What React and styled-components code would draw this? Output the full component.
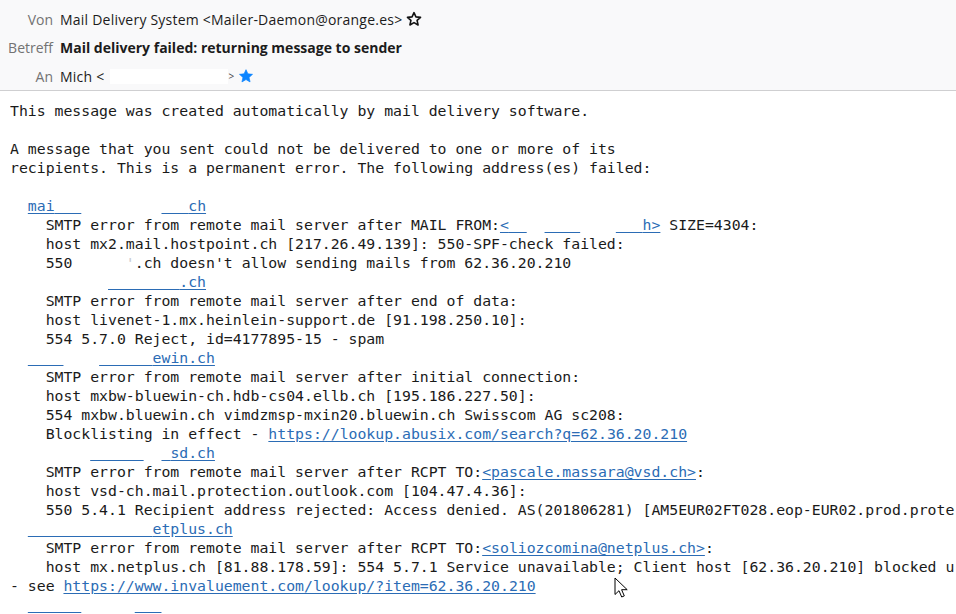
import React from "react";
import styled, { createGlobalStyle } from "styled-components";

const Global = createGlobalStyle`
  html, body { margin: 0; padding: 0; background: #fff; }
  body { overflow: hidden; }
`;

const Page = styled.div`
  position: relative;
  width: 956px;
  height: 614px;
  overflow: hidden;
  background: #fff;
`;

const Header = styled.div`
  display: grid;
  grid-template-columns: 53px 1fr;
  grid-auto-rows: 28.5px;
  column-gap: 7px;
  padding-top: 5px;
  height: 85px;
  background: #f9f9fa;
  border-bottom: 1px solid #cfcfd1;
  font-family: "Open Sans", "Noto Sans", sans-serif;
  font-size: 14px;
`;

const Label = styled.div`
  display: flex;
  align-items: center;
  justify-content: flex-end;
  color: #737373;
  white-space: nowrap;
`;

const Value = styled.div`
  display: flex;
  align-items: center;
  gap: 4px;
  color: #1c1c1c;
  font-weight: ${({ $bold }) => ($bold ? 700 : 400)};
  letter-spacing: ${({ $bold }) => ($bold ? "0" : "0.22px")};
  white-space: nowrap;
`;

const Redact = styled.span`
  display: inline-block;
  width: 118px;
  height: 15px;
  background: #fff;
  margin-left: 2px;
`;

const Small = styled.span`
  font-size: 10px;
  color: #444;
  margin-left: -4px;
`;

const Body = styled.div`
  padding: 10px 0 0 10px;
  font-family: "DejaVu Sans Mono", "Liberation Mono", monospace;
  font-size: 14.8px;
  line-height: 19px;
  color: #1a1a1a;
  white-space: pre;
`;

const Line = styled.div`
  height: 19px;
  overflow: hidden;
`;

const U = styled.span`
  color: #2b6cb5;
  text-decoration: underline;
  text-underline-offset: 2px;
`;

const Faint = styled.span`
  color: #c8ccd2;
`;

const Cursor = styled.svg`
  position: absolute;
  left: 614px;
  top: 577px;
`;

function Star({ filled }) {
  return (
    <svg width="16" height="16" viewBox="0 0 24 24">
      <path
        d="M12 2.5l2.9 6.3 6.9.7-5.2 4.6 1.5 6.8L12 17.4l-6.1 3.5 1.5-6.8L2.2 9.5l6.9-.7z"
        fill={filled ? "#0a84ff" : "none"}
        stroke={filled ? "#0a84ff" : "#111"}
        strokeWidth={filled ? 1 : 2.4}
        strokeLinejoin="round"
      />
    </svg>
  );
}

// one redacted link: strings are shown, {u:n} is an underlined blank, {g:n} a plain blank
function Masked({ parts }) {
  return parts.map((p, i) => {
    if (typeof p === "string") return <U key={i}>{p}</U>;
    if (p.u) return <U key={i}>{"\u00a0".repeat(p.u)}</U>;
    if (p.f) return <Faint key={i}>{p.f}</Faint>;
    return <span key={i}>{" ".repeat(p.g)}</span>;
  });
}

const App = () => {
  return (
    <Page>
      <Global />
      <Header>
        <Label>Von</Label>
        <Value>
          Mail Delivery System &lt;Mailer-Daemon@orange.es&gt;
          <Star />
        </Value>
        <Label>Betreff</Label>
        <Value $bold>Mail delivery failed: returning message to sender</Value>
        <Label>An</Label>
        <Value>
          Mich &lt;<Redact />
          <Small>&gt;</Small>
          <Star filled />
        </Value>
      </Header>
      <Body>
        <Line>This message was created automatically by mail delivery software.</Line>
        <Line> </Line>
        <Line>A message that you sent could not be delivered to one or more of its</Line>
        <Line>recipients. This is a permanent error. The following address(es) failed:</Line>
        <Line> </Line>
        <Line>
          {"  "}
          <Masked parts={["mai", { u: 3 }, { g: 9 }, { u: 3 }, "ch"]} />
        </Line>
        <Line>
          {"    SMTP error from remote mail server after MAIL FROM:"}
          <Masked parts={["<", { u: 2 }, { g: 2 }, { u: 4 }, { g: 4 }, { u: 3 }, "h>"]} />
          {" SIZE=4304:"}
        </Line>
        <Line>    host mx2.mail.hostpoint.ch [217.26.49.139]: 550-SPF-check failed:</Line>
        <Line>
          {"    550      "}
          <Faint>'</Faint>
          {".ch doesn't allow sending mails from 62.36.20.210"}
        </Line>
        <Line>
          {"  "}
          <Masked parts={[{ g: 9 }, { u: 8 }, ".ch"]} />
        </Line>
        <Line>    SMTP error from remote mail server after end of data:</Line>
        <Line>    host livenet-1.mx.heinlein-support.de [91.198.250.10]:</Line>
        <Line>    554 5.7.0 Reject, id=4177895-15 - spam</Line>
        <Line>
          {"  "}
          <Masked parts={[{ u: 4 }, { g: 4 }, { u: 6 }, "ewin.ch"]} />
        </Line>
        <Line>    SMTP error from remote mail server after initial connection:</Line>
        <Line>    host mxbw-bluewin-ch.hdb-cs04.ellb.ch [195.186.227.50]:</Line>
        <Line>    554 mxbw.bluewin.ch vimdzmsp-mxin20.bluewin.ch Swisscom AG sc208:</Line>
        <Line>
          {"    Blocklisting in effect - "}
          <U>https://lookup.abusix.com/search?q=62.36.20.210</U>
        </Line>
        <Line>
          {"  "}
          <Masked parts={[{ g: 7 }, { u: 6 }, { g: 2 }, { u: 1 }, "sd.ch"]} />
        </Line>
        <Line>
          {"    SMTP error from remote mail server after RCPT TO:"}
          <U>&lt;pascale.massara@vsd.ch&gt;</U>:
        </Line>
        <Line>    host vsd-ch.mail.protection.outlook.com [104.47.4.36]:</Line>
        <Line>
          {"    550 5.4.1 Recipient address rejected: Access denied. AS(201806281) [AM5EUR02FT028.eop-EUR02.prod.prote"}
        </Line>
        <Line>
          {"  "}
          <Masked parts={[{ u: 14 }, "etplus.ch"]} />
        </Line>
        <Line>
          {"    SMTP error from remote mail server after RCPT TO:"}
          <U>&lt;soliozcomina@netplus.ch&gt;</U>:
        </Line>
        <Line>
          {"    host mx.netplus.ch [81.88.178.59]: 554 5.7.1 Service unavailable; Client host [62.36.20.210] blocked u"}
        </Line>
        <Line>
          {"- see "}
          <U>https://www.invaluement.com/lookup/?item=62.36.20.210</U>
        </Line>
        <Line>
          {"  "}
          <Masked parts={[{ u: 6 }, { g: 6 }, { u: 3 }]} />
        </Line>
      </Body>
      <Cursor width="14" height="22" viewBox="0 0 14 22">
        <path
          d="M1 1v16.5l4-3.8 2.7 6.3 2.6-1.1-2.7-6.2h5.6z"
          fill="#fff"
          stroke="#000"
          strokeWidth="1"
          strokeLinejoin="round"
        />
      </Cursor>
    </Page>
  );
};

export default App;
